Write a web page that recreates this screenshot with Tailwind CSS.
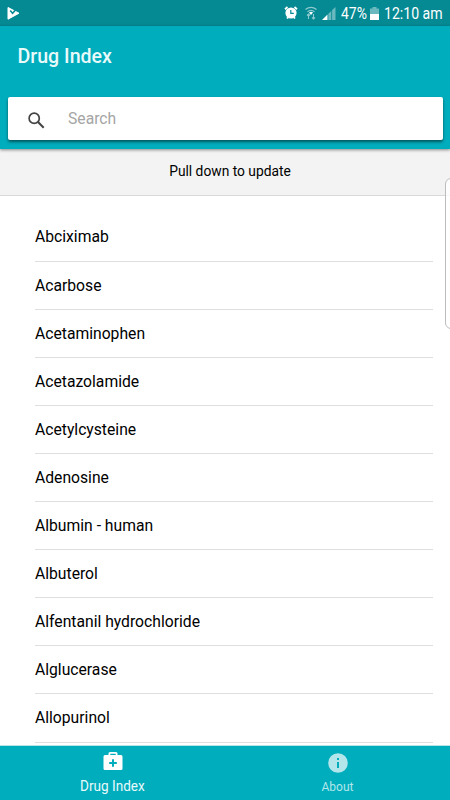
<!DOCTYPE html>
<html lang="en">
 <head>
  <meta charset="utf-8"/>
  <meta content="width=device-width, initial-scale=1.0" name="viewport"/>
  <title>
   Drug Index
  </title>
  <script src="https://cdn.jsdelivr.net/npm/@tailwindcss/browser@4"></script>
 </head>
 <body class="bg-white font-[Roboto,sans-serif] overflow-hidden">
  <div class="relative w-[450px] h-[800px] flex flex-col overflow-hidden">
   <!-- Status bar -->
   <div class="h-[26px] shrink-0 bg-[#058993] flex items-center justify-between pl-[7px] pr-[8px] text-white">
    <svg class="w-[13px] h-[13px]" viewBox="0 0 13 13">
     <path d="M1 .5 12 6.2 1 12.2z" fill="#fff" stroke="#fff" stroke-linejoin="round"/>
     <path d="M3.2 3.6 5.6 6.3 9.8 1.6" fill="none" stroke="#058993" stroke-width="1.5"/>
    </svg>
    <div class="flex items-center">
     <svg class="w-[14px] h-[14px] mr-[6px]" viewBox="0 0 14 14">
      <path d="M1 3.2 3.5 1M13 3.2 10.5 1M3 12.5 4 11.3M11 12.5 10 11.3" stroke="#fff" stroke-width="1.8"/>
      <circle cx="7" cy="7" fill="#fff" r="5.6"/>
      <path d="M6.8 4V7.3H9.8" fill="none" stroke="#058993" stroke-width="1.2"/>
     </svg>
     <svg class="w-[14px] h-[14px] mr-[4px]" fill="none" viewBox="0 0 14 14">
      <path d="M1.5 3.6Q7-1 12.5 3.6M3.5 5.8Q7 2.9 10.5 5.8" stroke="#8cc9ce" stroke-width="1.3"/>
      <path d="M5 6.4Q7 5.3 9 6.4L7 9z" fill="#fff"/>
      <path d="M4.5 8V13M3 9.5 4.5 8 6 9.5M9.5 8V13M8 11.5 9.5 13 11 11.5" stroke="#8cc9ce" stroke-width="1.1"/>
     </svg>
     <svg class="w-[14px] h-[13px] mr-[5px]" viewBox="0 0 14 13">
      <path d="M0 13 5.5 7.6V13z" fill="#fff"/>
      <path d="M6.3 6.8 9.3 3.9V13H6.3zM10.1 3.1 13.5 0V13H10.1z" fill="#69b9bf"/>
     </svg>
     <span class="text-[16px] leading-[26px] w-[26px] whitespace-nowrap">
      <span class="inline-block origin-left scale-x-[0.87] pt-[2px]">47%</span>
     </span>
     <svg class="w-[9px] h-[13px] ml-[3px] mr-[5px]" viewBox="0 0 9 13">
      <path d="M2.5 0H6.5V1.5H9V7H0V1.5H2.5z" fill="#69b9bf"/>
      <path d="M0 7H9V13H0z" fill="#fff"/>
     </svg>
     <span class="text-[16px] leading-[26px] w-[58px] whitespace-nowrap">
      <span class="inline-block origin-left scale-x-[0.88] pt-[2px]">12:10 am</span>
     </span>
    </div>
   </div>
   <!-- Header with search -->
   <div class="relative h-[123px] shrink-0 bg-[#00adbd] shadow-[0_1px_3px_rgba(0,0,0,0.45)] pt-[18px] px-[8px] z-10">
    <h1 class="pl-[9.5px] text-[19.6px] leading-[26px] font-medium text-[#e9fafb]">
     Drug Index
    </h1>
    <div class="mt-[27px] mr-[-1px] w-[435px] h-[43px] bg-white rounded-[2px] shadow-[0_2px_3px_rgba(0,0,0,0.5)] flex items-center">
     <svg class="w-[17px] h-[17px] ml-[20px] mt-[3px]" fill="none" stroke="#444" viewBox="0 0 17 17">
      <circle cx="6.2" cy="6.2" r="5.1" stroke-width="1.7"/>
      <path d="M10 10 15.7 15.7" stroke-width="2.1"/>
     </svg>
     <span class="ml-[23px] pt-[1px] text-[15.7px] text-[#a5a5a5]">
      Search
     </span>
    </div>
   </div>
   <div class="h-[47px] shrink-0 bg-[#f3f3f3] border-b border-[#d9d9d9] text-center text-[13.8px] leading-[45px] pl-[10px] text-black">
    Pull down to update
   </div>
   <!-- Drug list -->
   <ul class="flex-1 min-h-0 overflow-hidden pt-[17.4px] pl-[35px] pr-[17px] text-[15.7px] leading-[47px] text-black">
    <li class="h-[48.12px] border-b border-[#dedede]">Abciximab</li>
    <li class="h-[48.12px] border-b border-[#dedede]">Acarbose</li>
    <li class="h-[48.12px] border-b border-[#dedede]">Acetaminophen</li>
    <li class="h-[48.12px] border-b border-[#dedede]">Acetazolamide</li>
    <li class="h-[48.12px] border-b border-[#dedede]">Acetylcysteine</li>
    <li class="h-[48.12px] border-b border-[#dedede]">Adenosine</li>
    <li class="h-[48.12px] border-b border-[#dedede]">Albumin - human</li>
    <li class="h-[48.12px] border-b border-[#dedede]">Albuterol</li>
    <li class="h-[48.12px] border-b border-[#dedede]">Alfentanil hydrochloride</li>
    <li class="h-[48.12px] border-b border-[#dedede]">Alglucerase</li>
    <li class="h-[48.12px] border-b border-[#dedede]">Allopurinol</li>
   </ul>
   <!-- Bottom tabs -->
   <div class="h-[55px] shrink-0 bg-[#00adbd] border-t border-[#b9e3e7] grid grid-cols-2 text-[#e9fafb]">
    <div class="flex flex-col items-center pt-[6px]">
     <svg class="w-[20px] h-[18px]" viewBox="0 0 20 18">
      <path d="M2 3H5.5V1.5Q5.5 0 7 0H13Q14.5 0 14.5 1.5V3H18Q19.5 3 19.5 4.5V16.5Q19.5 18 18 18H2Q.5 18 .5 16.5V4.5Q.5 3 2 3M7.3 3H12.7V1.8H7.3zM9 7.2V10H6.2V12H9V14.8H11V12H13.8V10H11V7.2z" fill="#fff" fill-rule="evenodd"/>
     </svg>
     <span class="mt-[6px] text-[14px] leading-[20px] scale-x-[0.97]">
      Drug Index
     </span>
    </div>
    <div class="flex flex-col items-center pt-[7px] text-[#b3e6eb]">
     <svg class="w-[20px] h-[20px]" viewBox="0 0 20 20">
      <circle cx="10" cy="10" fill="#b3e6eb" r="9.8"/>
      <path d="M9 5H11V7H9zM9 9H11V15H9z" fill="#00adbd"/>
     </svg>
     <span class="mt-[4px] text-[12px] leading-[20px]">
      About
     </span>
    </div>
   </div>
   <!-- Edge panel handle -->
   <div class="absolute z-20 left-[445px] top-[178px] w-[12px] h-[151px] rounded-[7px] border border-[#bdbdbd] bg-white/80">
   </div>
  </div>
 </body>
</html>
